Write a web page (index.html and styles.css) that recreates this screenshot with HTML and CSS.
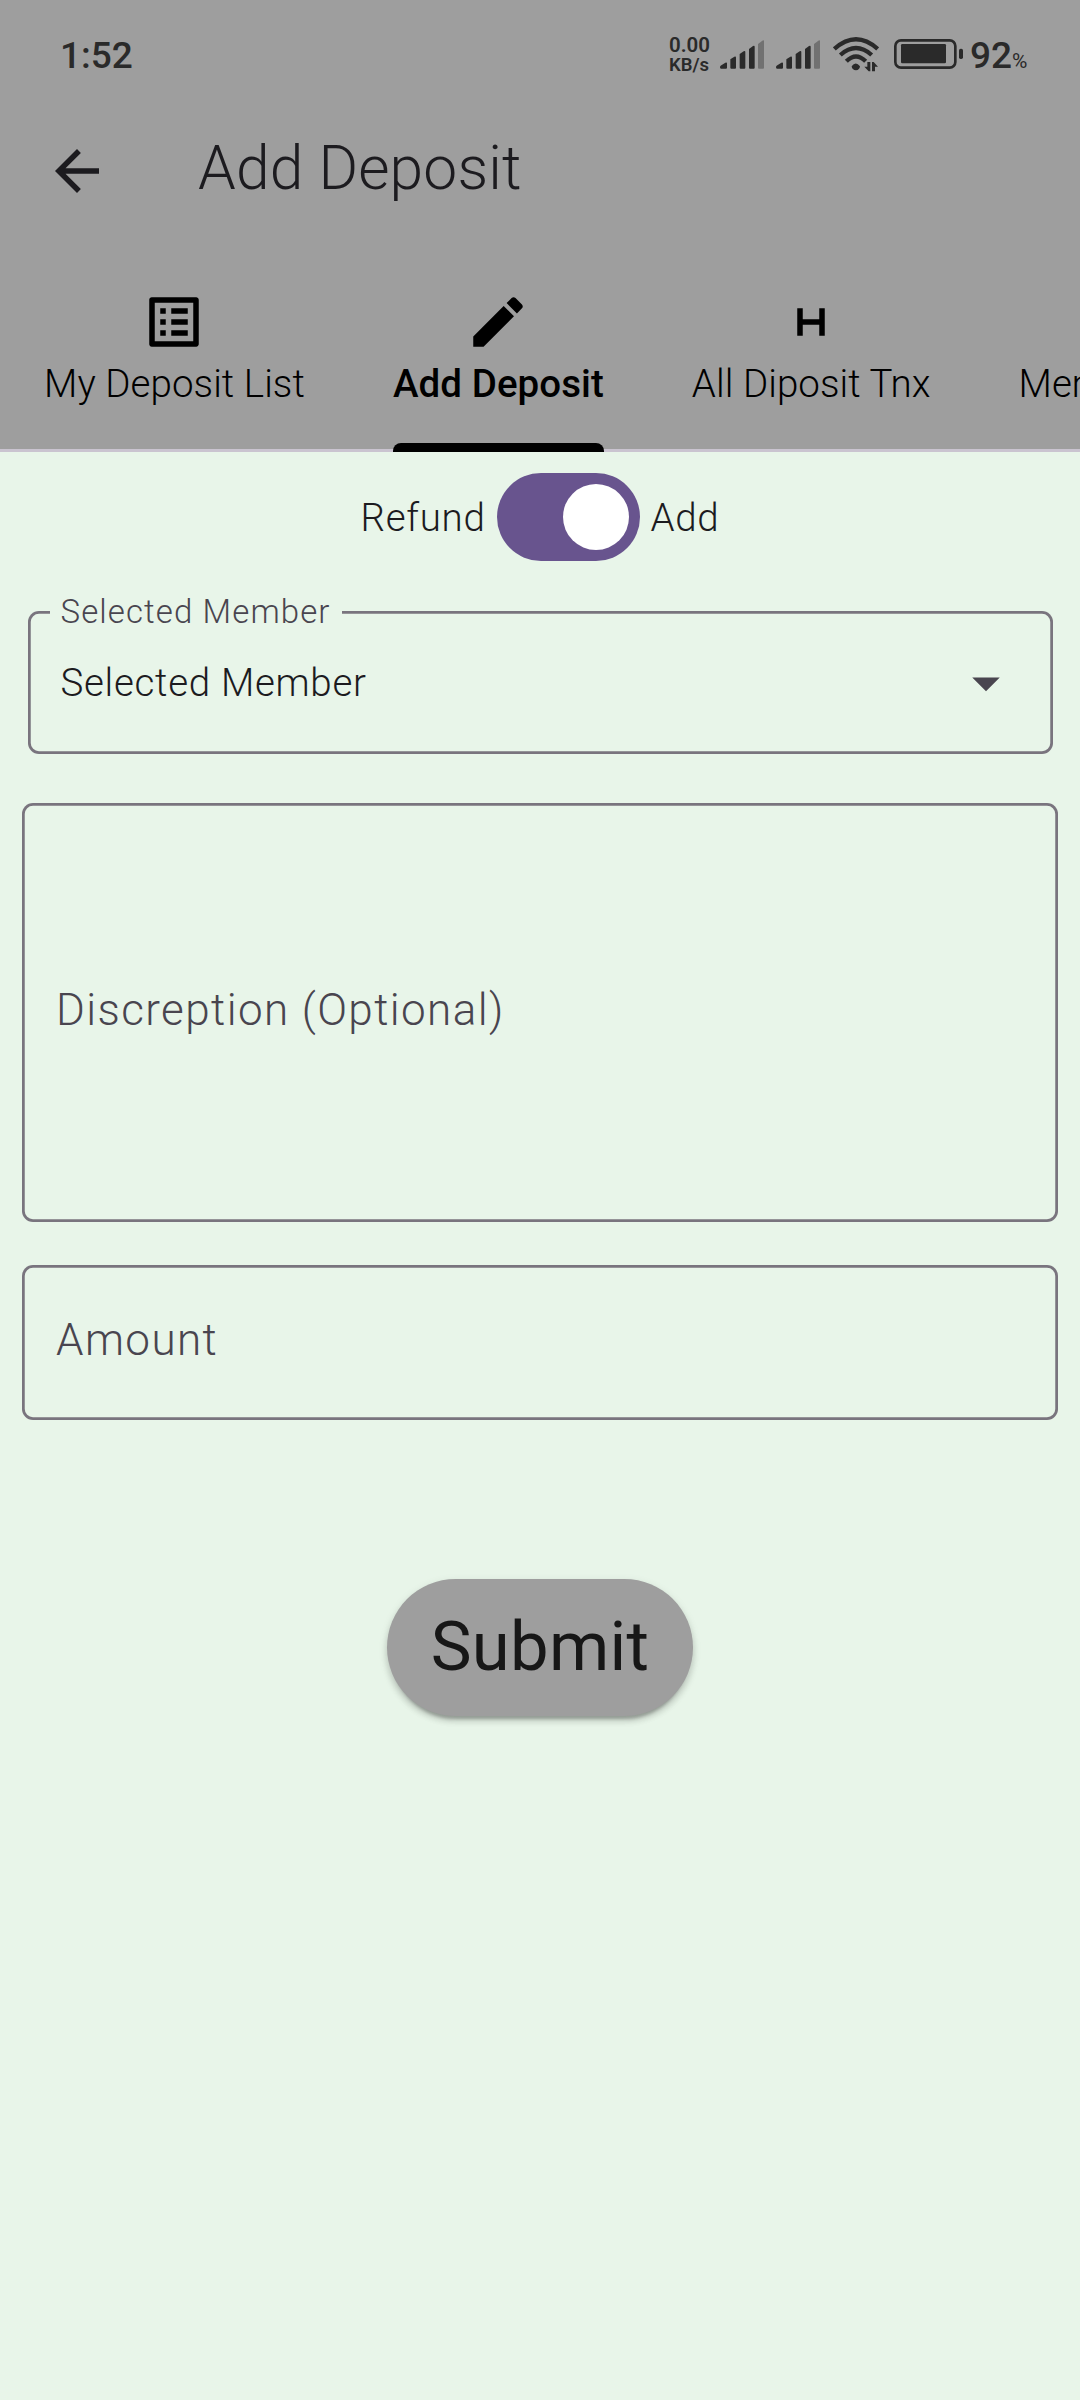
FILE: index.html
```html
<!DOCTYPE html>
<html lang="en">
<head>
<meta charset="utf-8">
<title>Add Deposit</title>
<link rel="stylesheet" href="styles.css">
</head>
<body>
<header class="header">
  <div class="status">
    <span class="clock">1:52</span>
    <div class="status-icons">
      <div class="speed"><span class="speed-value">0.00</span><span class="speed-unit">KB/s</span></div>
      <svg class="signal" viewBox="0 0 132 90"><g fill="#2a2a2a"><path d="M0 82q0-4 4-6l12-8q5-2 5 2v13q0 3-3 3H3q-3 0-3-4z"/><path d="M31 58l12-8q5-2 5 2v31q0 3-3 3H34q-3 0-3-3z"/><path d="M59 42l12-8q5-2 5 2v47q0 3-3 3H62q-3 0-3-3z"/><path d="M87 27l12-9q5-2 5 2v63q0 3-3 3H90q-3 0-3-3z"/></g><path fill="#717171" d="M114 12l13-10q5-3 5 1v80q0 3-3 3h-12q-3 0-3-3z"/></svg>
      <svg class="signal signal-second" viewBox="0 0 132 90"><g fill="#2a2a2a"><path d="M0 82q0-4 4-6l12-8q5-2 5 2v13q0 3-3 3H3q-3 0-3-4z"/><path d="M31 58l12-8q5-2 5 2v31q0 3-3 3H34q-3 0-3-3z"/><path d="M59 42l12-8q5-2 5 2v47q0 3-3 3H62q-3 0-3-3z"/><path d="M87 27l12-9q5-2 5 2v63q0 3-3 3H90q-3 0-3-3z"/></g><path fill="#717171" d="M114 12l13-10q5-3 5 1v80q0 3-3 3h-12q-3 0-3-3z"/></svg>
      <svg class="wifi" viewBox="0 0 138 105"><g fill="none" stroke="#2a2a2a" stroke-width="13"><path d="M4 36Q69-22 134 36"/><path d="M22 54Q69 12 116 54"/><path d="M40 73Q69 44 98 73"/></g><path fill="#2a2a2a" d="M56 88q12-17 25 0q-1 11-12 12q-12-1-13-12zM103 75h9v28h-5l-13-14h9zM117 103V75h5l13 14h-9v14z"/></svg>
      <svg class="battery" viewBox="0 0 207 90"><rect x="4" y="4" width="180" height="82" rx="17" fill="none" stroke="#2a2a2a" stroke-width="8"/><rect x="21" y="15" width="135" height="58" rx="4" fill="#2a2a2a"/><rect x="195" y="29" width="12" height="31" rx="5" fill="#2a2a2a"/></svg>
      <span class="charge">92<small class="percent">%</small></span>
    </div>
  </div>
  <div class="appbar">
    <svg class="icon" viewBox="0 0 24 24"><path d="M20 11H7.83l5.59-5.59L12 4l-8 8 8 8 1.41-1.41L7.83 13H20v-2z"/></svg>
    <h1 class="title">Add Deposit</h1>
  </div>
  <nav class="tabs">
    <a class="tab tab-list"><svg class="icon" viewBox="0 0 24 24"><path d="M19 5v14H5V5h14m1.1-2H3.9c-.5 0-.9.4-.9.9v16.2c0 .4.4.9.9.9h16.2c.4 0 .9-.5.9-.9V3.900c0-.5-.5-.9-.9-.9zM11 7h6v2h-6V7zm0 4h6v2h-6v-2zm0 4h6v2h-6zM7 7h2v2H7zm0 4h2v2H7zm0 4h2v2H7z"/></svg><span class="tab-label">My Deposit List</span></a>
    <a class="tab tab-add active"><svg class="icon" viewBox="0 0 24 24"><path d="M3 17.250V21h3.750L17.810 9.940l-3.750-3.750L3 17.250zM20.710 7.040c.39-.39.39-1.020 0-1.410l-2.340-2.340c-.39-.39-1.020-.39-1.410 0l-1.830 1.830 3.750 3.750 1.830-1.830z"/></svg><span class="tab-label">Add Deposit</span></a>
    <a class="tab tab-all"><svg class="icon" viewBox="0 0 24 24"><path d="M15 11H9V7H7v10h2v-4h6v4h2V7h-2v4z"/></svg><span class="tab-label">All Diposit Tnx</span></a>
    <a class="tab tab-member"><span class="icon"></span><span class="tab-label">Member</span></a>
  </nav>
</header>
<main class="form">
  <div class="mode"><span class="mode-label">Refund</span><span class="switch"><span class="thumb"></span></span><span class="mode-label">Add</span></div>
  <div class="field select"><span class="floating">Selected Member</span><span class="value">Selected Member</span><svg class="caret" viewBox="0 0 24 24"><path d="M7 10l5 5 5-5z"/></svg></div>
  <div class="field description"><span class="hint">Discreption (Optional)</span></div>
  <div class="field amount"><span class="hint">Amount</span></div>
  <button class="submit">Submit</button>
</main>
</body>
</html>
```
FILE: styles.css
```css
* { box-sizing: border-box; }
body {
  margin: 0;
  width: 1080px;
  height: 2400px;
  overflow: hidden;
  background: #e8f5e9;
  font-family: Roboto, sans-serif;
  font-weight: 300;
  color: #1c1b1f;
}
svg { display: block; flex: none; }
span { white-space: nowrap; }
.header { height: 452px; background: #9e9e9e; overflow: hidden; }
.status { display: flex; justify-content: space-between; height: 110px; padding: 0 52px 0 60px; color: #2a2a2a; }
.clock { font-size: 37px; font-weight: 500; line-height: 112px; }
.status-icons { display: flex; align-items: flex-start; }
.speed { display: flex; flex-direction: column; width: 51px; padding-top: 35px; font-weight: 600; }
.speed-value { font-size: 20.500px; line-height: 21px; }
.speed-unit { font-size: 18.500px; line-height: 18px; }
.signal { width: 44px; height: 30px; margin-top: 40px; }
.signal-second { margin-left: 12px; }
.wifi { width: 46px; height: 35px; margin: 37px 0 0 13px; }
.battery { width: 69px; height: 30px; margin: 39px 7px 0 15px; }
.charge { width: 58px; font-size: 37px; font-weight: 500; line-height: 111px; }
.percent { font-size: 21px; font-weight: 400; }
.appbar { display: flex; align-items: center; height: 122px; padding-left: 44px; }
.icon { width: 66px; height: 66px; fill: #1c1b1f; }
.title { margin: 0 0 4px 88px; font-size: 60.500px; font-weight: 300; line-height: 80px; letter-spacing: 0.150px; }
.tabs { display: flex; height: 220px; padding-top: 57px; box-shadow: inset 0 -3px #cac4d0; color: #000; }
.tab { display: flex; flex-direction: column; align-items: center; flex: none; height: 163px; margin: 0 44px; }
.tab .icon { fill: #000; }
.tab-label { font-size: 38.500px; line-height: 46px; margin-top: 6px; letter-spacing: 0.070px; }
.active .tab-label { font-weight: 500; }
.active::after { content: ""; align-self: stretch; height: 9px; margin-top: auto; background: #000; border-radius: 8px 8px 0 0; }
.form { display: flex; flex-direction: column; align-items: center; }
.mode { display: flex; align-items: center; gap: 11px; height: 88px; margin-top: 21px; }
.mode-label { font-size: 38.500px; line-height: 46px; padding-top: 2px; letter-spacing: 0.690px; }
.switch { display: flex; justify-content: flex-end; width: 143px; height: 88px; padding: 11px; border-radius: 44px; background: #68548e; }
.thumb { width: 66px; height: 66px; border-radius: 50%; background: #fff; }
.field { display: flex; align-items: center; border-radius: 11px; box-shadow: inset 0 0 0 2.750px #79747e; }
.select { position: relative; width: 1025px; height: 143px; margin-top: 50px; padding: 0 34px 0 33px; justify-content: space-between; }
.floating { position: absolute; left: 22px; top: -21px; padding: 0 11px; background: #e8f5e9; color: #49454f; font-size: 33px; line-height: 44px; letter-spacing: 1.100px; }
.value { font-size: 38.500px; line-height: 46px; letter-spacing: 0.690px; }
.caret { width: 66px; height: 66px; fill: #49454f; }
.description { width: 1036px; height: 419px; margin-top: 49px; padding: 0 34px 5px; }
.amount { width: 1036px; height: 155px; margin-top: 43px; padding: 0 34px 5px; }
.hint { font-size: 44px; line-height: 53px; letter-spacing: 1.400px; color: #49454f; }
.submit { width: 306px; height: 137px; margin-top: 159px; padding: 0 0 3px; border: 0; border-radius: 69px; background: #9e9e9e; color: #171717; font: 400 68.750px/79px Roboto, sans-serif; letter-spacing: 0.275px; box-shadow: 0 8px 3px -5px rgba(0,0,0,.2), 0 5px 6px rgba(0,0,0,.14), 0 3px 10px rgba(0,0,0,.1); }
```
